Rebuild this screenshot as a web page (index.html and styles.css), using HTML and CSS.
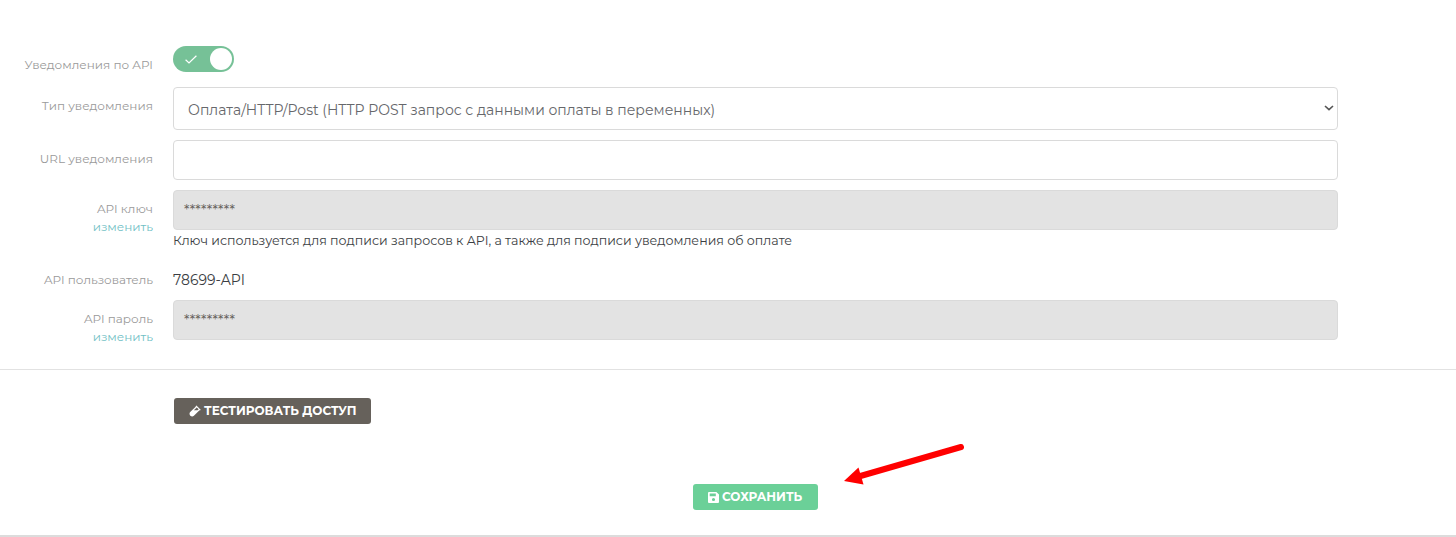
FILE: index.html
```html
<!DOCTYPE html>
<html lang="ru">
<head>
<meta charset="utf-8">
<title>API</title>
<link rel="stylesheet" href="styles.css">
</head>
<body>
<form class="form">
  <div class="row row-switch">
    <div class="label"><span>Уведомления по API</span></div>
    <div class="field"><span class="switch"><svg class="check" viewBox="0 0 12 9"><path d="M.6 4.8 4 8 11.4.7"/></svg><span class="knob"></span></span></div>
  </div>
  <div class="row row-type">
    <div class="label"><span>Тип уведомления</span></div>
    <div class="field select"><span>Оплата/HTTP/Post (HTTP POST запрос с данными оплаты в переменных)</span><svg class="chevron" viewBox="0 0 10 6"><path d="M1 1l4 3.7L9 1"/></svg></div>
  </div>
  <div class="row row-url">
    <div class="label"><span>URL уведомления</span></div>
    <div class="field input"></div>
  </div>
  <div class="row row-key">
    <div class="label"><span>API ключ</span><a>изменить</a></div>
    <div class="field">
      <div class="input locked"><span>*********</span></div>
      <div class="help">Ключ используется для подписи запросов к API, а также для подписи уведомления об оплате</div>
    </div>
  </div>
  <div class="row row-user">
    <div class="label"><span>API пользователь</span></div>
    <div class="field value">78699-API</div>
  </div>
  <div class="row row-pass">
    <div class="label"><span>API пароль</span><a>изменить</a></div>
    <div class="field input locked"><span>*********</span></div>
  </div>
  <div class="test-area">
    <button type="button" class="btn btn-test"><svg class="icon-test" viewBox="0 0 12 12"><path fill-rule="evenodd" d="M7.400.4 11.700 4.700 11 5.500 10.500 5.200 4.900 10.800Q3.200 12.300 1.300 10.700-.2 8.900 1.200 7.100L6.900 1.600 6.600 1.200ZM7.700 2.400 4.900 5.200H8.500L9.700 4.200Z"/></svg><span>ТЕСТИРОВАТЬ ДОСТУП</span></button>
  </div>
  <div class="save-area">
    <button type="button" class="btn btn-save"><svg class="icon-save" viewBox="0 0 11 11"><path fill-rule="evenodd" d="M1 0H8.400L11 2.600V10Q11 11 10 11H1Q0 11 0 10V1Q0 0 1 0ZM1.700 1.600V4.300H7.800V1.600ZM5.500 5.900a1.600 1.600 0 1 0 0 3.200 1.600 1.600 0 0 0 0-3.200Z"/></svg><span>СОХРАНИТЬ</span></button>
    <svg class="arrow" viewBox="0 0 124 46"><path class="shaft" d="M119 7 15 37"/><path class="head" d="M2 41 16.500 27.500 21.500 44.500Z"/></svg>
  </div>
</form>
</body>
</html>
```
FILE: styles.css
```css
* { box-sizing: border-box; }
body { margin: 0; background: #fff; font-family: Montserrat, Inter, "Noto Sans", sans-serif; font-size: 12px; color: #3b3e43; }
.form { height: 537px; padding-top: 46px; display: flex; flex-direction: column; }
.row { display: grid; grid-template-columns: 153px 1165px; column-gap: 20px; flex: none; }
.row-switch { height: 41px; }
.row-type { height: 53px; }
.row-url { height: 50px; }
.row-key { height: 72px; }
.row-user { height: 38px; }
.row-pass { height: 61px; }
.label { display: flex; flex-direction: column; align-items: flex-end; padding-top: 10px; line-height: 18px; color: #9a9a9a; white-space: nowrap; }
.label a { color: #72bfc5; }
.row-user .label { padding-top: 9px; }
.switch { display: flex; align-items: center; justify-content: space-between; width: 61px; height: 26px; border-radius: 13px; background: #76c197; padding: 0 2px 0 12px; }
.check { width: 12px; height: 9px; fill: none; stroke: #fff; stroke-width: 1.2; }
.knob { width: 22px; height: 22px; border-radius: 50%; background: #fff; }
.select, .input { display: flex; align-items: center; border: 1px solid #dadada; border-radius: 4px; white-space: nowrap; }
.select { height: 43px; padding: 0 3px 0 14px; justify-content: space-between; font-size: 14px; color: #66676b; }
.select span { padding-top: 2px; }
.input { height: 40px; padding: 0 10px; }
.locked { background: #e3e3e3; color: #66615b; font-size: 14px; }
.chevron { width: 10px; height: 6px; margin-bottom: 1px; fill: none; stroke: #555; stroke-width: 1.6; }
.help { line-height: 22px; font-size: 12.6px; white-space: nowrap; }
.value { font-size: 14px; line-height: 36px; }
.test-area { border-top: 1px solid #e2e2e2; margin-top: 8px; padding: 28px 0 0 174px; height: 115px; flex: none; }
.save-area { display: flex; position: relative; flex: 1; border-bottom: 2px solid #dcdcdc; padding-left: 693px; }
.btn { display: flex; align-items: center; height: 26px; border: 0; border-radius: 3px; color: #fff; font: 700 12px Montserrat, Inter, sans-serif; padding: 0 15px; white-space: nowrap; }
.btn span { padding-bottom: 2px; }
.btn-test { width: 197px; background: #66615b; gap: 3px; }
.btn-save { width: 125px; background: #6bd098; gap: 3px; }
.btn svg { flex: none; fill: #fff; }
.icon-test { width: 12px; height: 12px; }
.icon-save { width: 11px; height: 11px; }
.arrow { position: absolute; left: 842px; top: -44px; width: 124px; height: 46px; }
.shaft { fill: none; stroke: #f00; stroke-width: 6; stroke-linecap: round; }
.head { fill: #f00; }
```
